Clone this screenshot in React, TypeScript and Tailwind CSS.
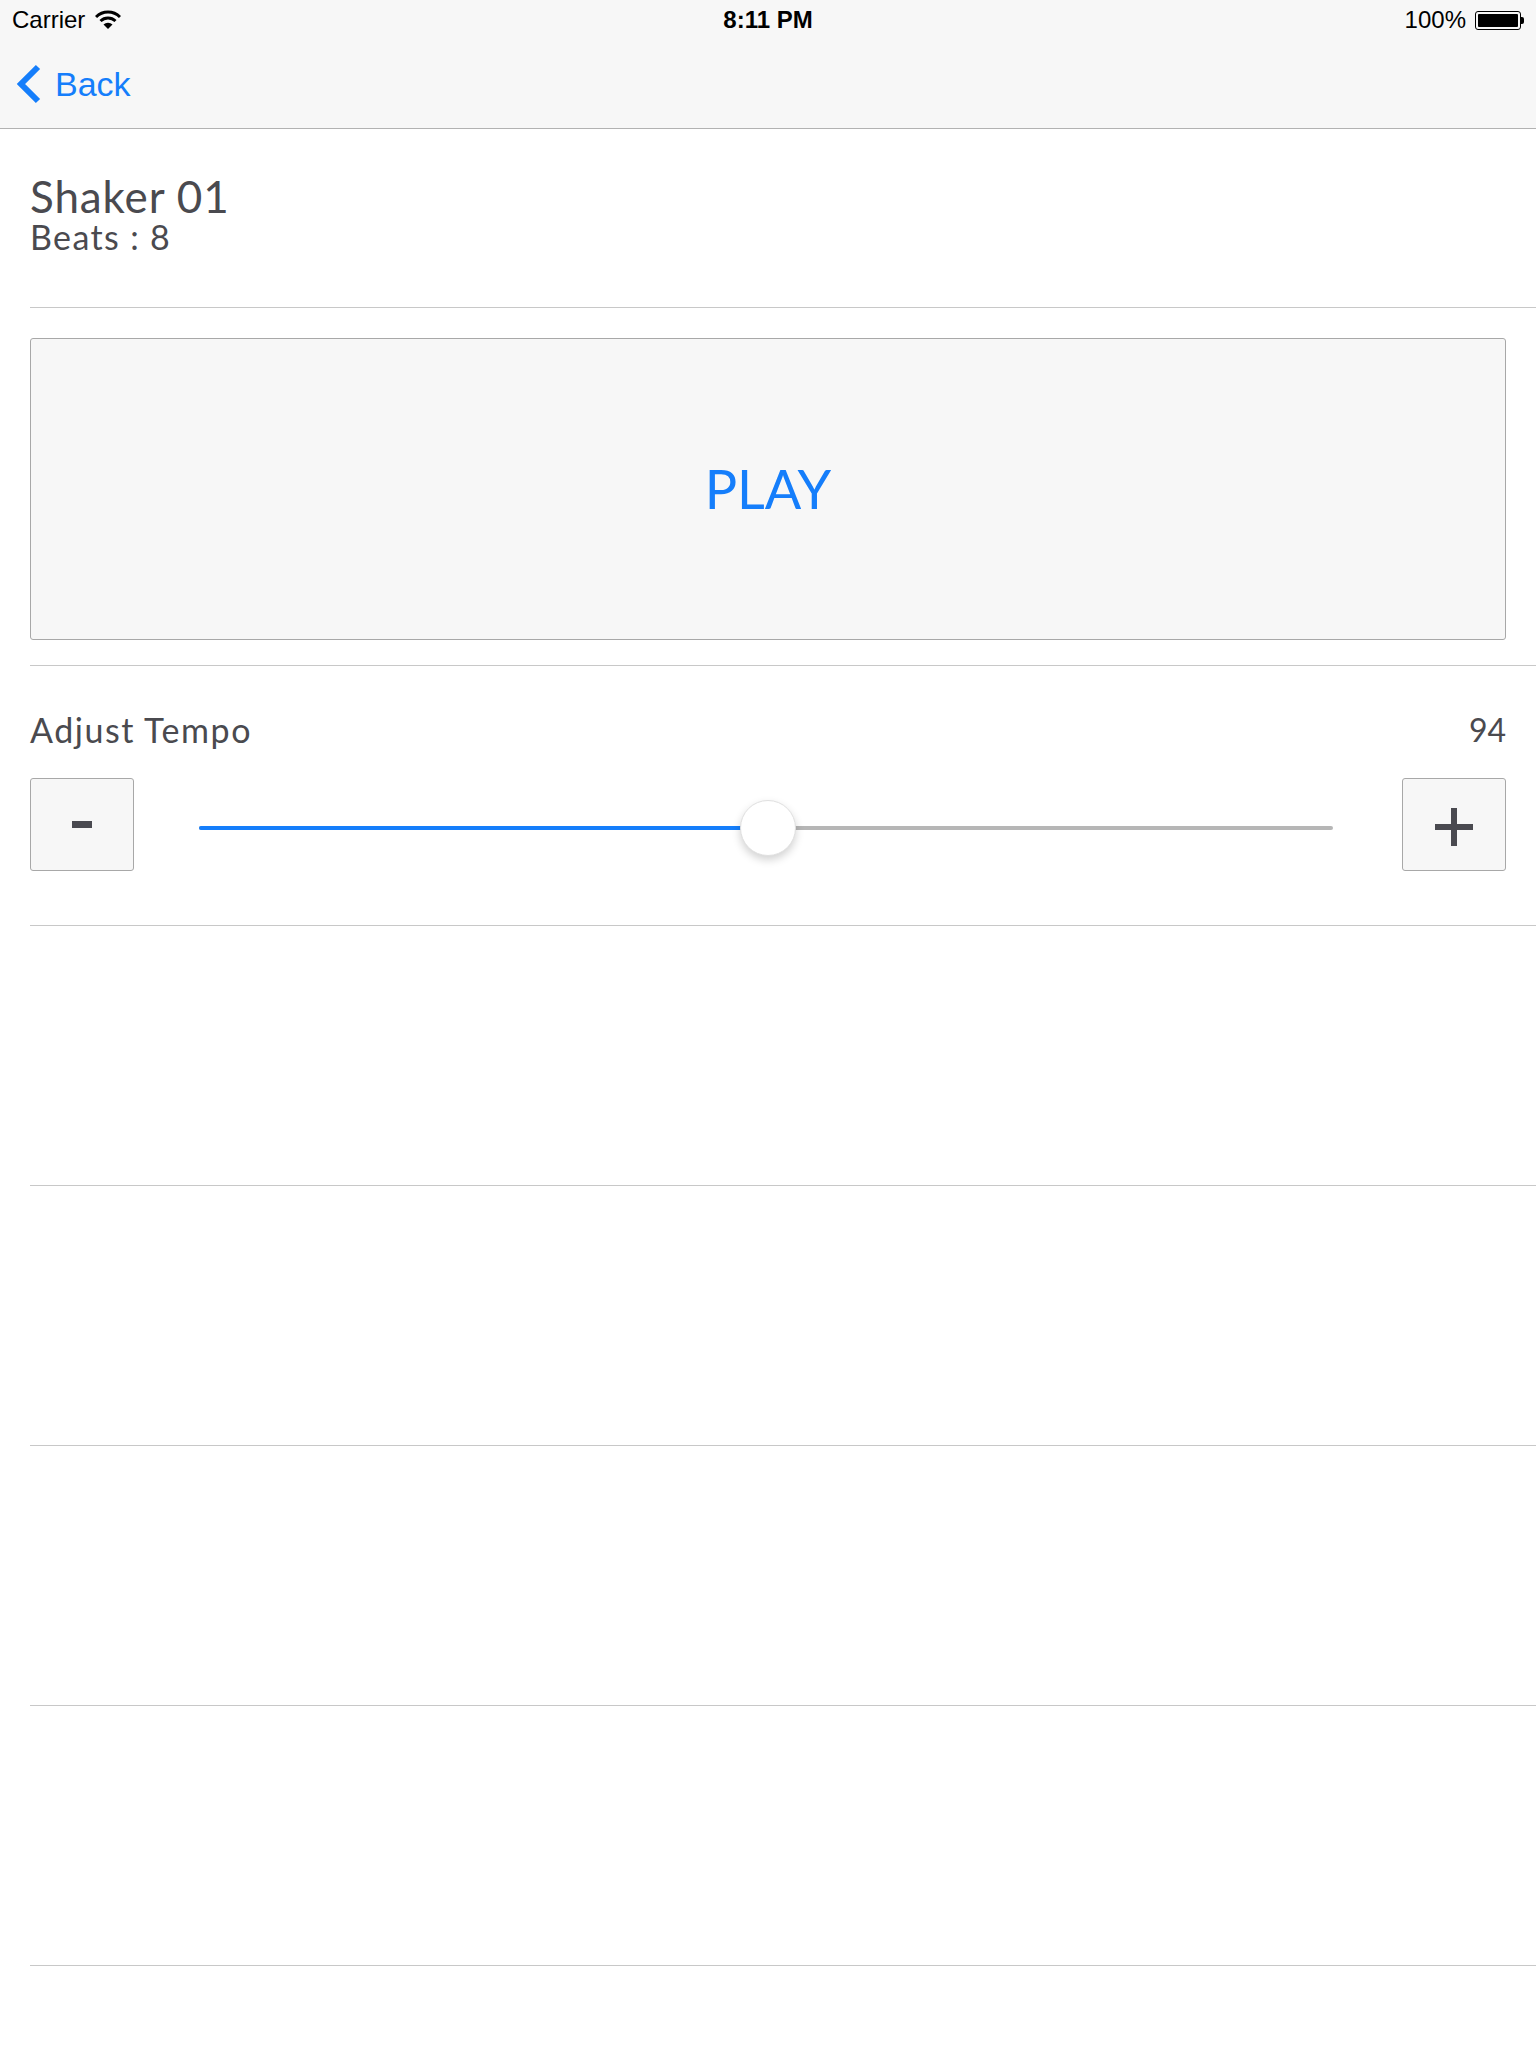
import React from "react";

const gothic = { fontFamily: "Lato, 'Open Sans', sans-serif" };
const helv = { fontFamily: "'Liberation Sans', Arial, sans-serif" };

export default function App() {
  return (
    <div className="w-[1536px] min-h-[2048px] bg-white">
      {/* Status + nav */}
      <div className="bg-[#f7f7f7] border-b border-[#b2b2b2]">
        <div className="h-[40px] relative flex items-center px-[12px] text-[24px] text-black" style={helv}>
          <span className="leading-none">Carrier</span>
          <svg className="ml-[10px]" width="26" height="20" viewBox="0 0 26 20">
            <path d="M1 7 A17 17 0 0 1 25 7" stroke="#000" strokeWidth="3" fill="none" />
            <path d="M5.5 11 A11 11 0 0 1 20.5 11" stroke="#000" strokeWidth="3" fill="none" />
            <path d="M13 19 L8.5 14.5 A6.5 6.5 0 0 1 17.5 14.5 Z" fill="#000" />
          </svg>
          <span className="absolute left-0 right-0 text-center font-semibold leading-none pointer-events-none">8:11 PM</span>
          <div className="ml-auto flex items-center">
            <span className="leading-none">100%</span>
            <div className="ml-[9px] w-[46px] h-[19px] border border-black rounded-[3px] p-[2px]">
              <div className="w-full h-full bg-black rounded-[1px]" />
            </div>
            <div className="w-[3px] h-[7px] bg-black rounded-r-[2px]" />
          </div>
        </div>
        <div className="h-[88px] flex items-center pl-[16px]">
          <svg width="26" height="40" viewBox="0 0 26 40">
            <path d="M22 3 L5 20 L22 37" stroke="#157efb" strokeWidth="6" fill="none" strokeLinecap="butt" strokeLinejoin="miter" />
          </svg>
          <span className="ml-[13px] text-[34px] text-[#157efb] leading-none" style={helv}>Back</span>
        </div>
      </div>

      {/* Content */}
      <div className="pl-[30px]" style={gothic}>
        <div className="h-[179px] border-b border-[#c8c8c8] pt-[46px] text-[#4a4a4f]">
          <div className="text-[44px] leading-[42px] tracking-[0.02em]">Shaker 01</div>
          <div className="text-[34px] leading-[36px] mt-[2px] tracking-[0.04em]">Beats : 8</div>
        </div>

        <div className="h-[358px] border-b border-[#c8c8c8] pt-[30px] pr-[30px]">
          <div className="h-[302px] bg-[#f7f7f7] border border-[#a8a8a8] rounded-[3px] flex items-center justify-center">
            <span className="text-[54px] text-[#157efb] leading-none">PLAY</span>
          </div>
        </div>

        <div className="h-[260px] border-b border-[#c8c8c8] pr-[30px] pt-[44px] text-[#4a4a4f]">
          <div className="flex items-center justify-between h-[40px]">
            <span className="text-[34px] leading-none tracking-[0.045em]">Adjust Tempo</span>
            <span className="text-[32px] leading-none">94</span>
          </div>
          <div className="flex items-center mt-[28px]">
            <div className="w-[104px] h-[93px] bg-[#f7f7f7] border border-[#a8a8a8] rounded-[3px] flex items-center justify-center">
              <div className="w-[20px] h-[7px] bg-[#4a4a50]" />
            </div>
            <div className="flex-1 pl-[65px] pr-[69px] relative h-[93px] flex items-center">
              <div className="relative w-full h-[4px] bg-[#b6b6b6] rounded-full mt-[6px]">
                <div className="absolute left-0 top-0 h-[4px] bg-[#157efb] rounded-full w-[569px]" />
                <div className="absolute left-[541px] top-[-26px] w-[56px] h-[56px] rounded-full bg-white border border-[#e0e0e0] shadow-[0_4px_8px_rgba(0,0,0,0.18)]" />
              </div>
            </div>
            <div className="w-[104px] h-[93px] bg-[#f7f7f7] border border-[#a8a8a8] rounded-[3px] flex items-center justify-center">
              <svg width="38" height="38" viewBox="0 0 38 38" className="mt-[5px]">
                <rect x="16" y="0" width="6" height="38" fill="#4a4a50" />
                <rect x="0" y="16" width="38" height="6" fill="#4a4a50" />
              </svg>
            </div>
          </div>
        </div>

        <div className="h-[260px] border-b border-[#c8c8c8]" />
        <div className="h-[260px] border-b border-[#c8c8c8]" />
        <div className="h-[260px] border-b border-[#c8c8c8]" />
        <div className="h-[260px] border-b border-[#c8c8c8]" />
      </div>
    </div>
  );
}
